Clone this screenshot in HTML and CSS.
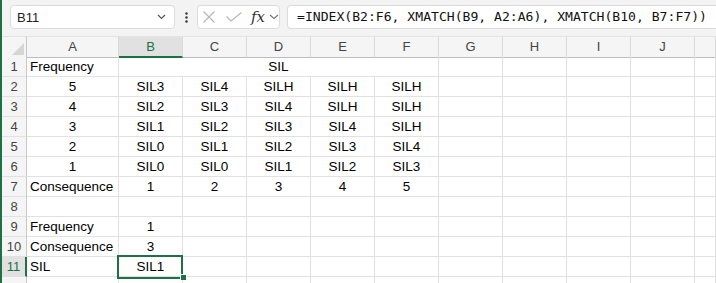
FILE: index.html
```html
<!DOCTYPE html>
<html lang="en">
<head>
  <meta charset="UTF-8">
  <title>SIL matrix</title>
  <link rel="stylesheet" href="styles.css">
</head>
<body>
<div class="app">
  <!-- name box + formula bar -->
  <div class="toolbar">
    <div class="namebox">
      <span>B11</span>
      <svg width="9" height="6" viewBox="0 0 9 6"><path d="M1 1 L4.5 4.5 L8 1" fill="none" stroke="#555" stroke-width="1.2"/></svg>
    </div>
    <div class="more">
      <svg width="3" height="11" viewBox="0 0 3 11"><circle cx="1.5" cy="1.5" r="1.2" fill="#333"/><circle cx="1.5" cy="5.5" r="1.2" fill="#333"/><circle cx="1.5" cy="9.5" r="1.2" fill="#333"/></svg>
    </div>
    <div class="fx-tools">
      <svg class="ico-x" width="12" height="12" viewBox="0 0 12 12"><path d="M0.5 0.5 L11.5 11.5 M11.5 0.5 L0.5 11.5" stroke="#b5b5b5" stroke-width="1.1"/></svg>
      <svg class="ico-ok" width="16" height="10" viewBox="0 0 16 10"><path d="M0.5 4.5 L5 9 L15.5 0.5" fill="none" stroke="#b5b5b5" stroke-width="1.1"/></svg>
      <span class="fx">fx</span>
      <svg width="10" height="6" viewBox="0 0 10 6"><path d="M1 1 L5 4.5 L9 1" fill="none" stroke="#777" stroke-width="1.1"/></svg>
    </div>
    <div class="formula">=INDEX(B2:F6, XMATCH(B9, A2:A6), XMATCH(B10, B7:F7))</div>
  </div>

  <!-- sheet grid -->
  <div class="sheet">
    <div class="row head">
      <div class="corner"><svg width="12" height="12" viewBox="0 0 12 12"><polygon points="12,0 12,12 0,12" fill="#d6d6d6"/></svg></div>
      <div class="col">A</div>
      <div class="col on">B</div>
      <div class="col">C</div>
      <div class="col">D</div>
      <div class="col">E</div>
      <div class="col">F</div>
      <div class="col">G</div>
      <div class="col">H</div>
      <div class="col">I</div>
      <div class="col">J</div>
      <div class="col"></div>
    </div>

    <div class="row">
      <div class="rh">1</div>
      <div class="c">Frequency</div>
      <div class="c mid merge">SIL</div>
      <div class="c"></div><div class="c"></div><div class="c"></div><div class="c"></div><div class="c"></div>
    </div>
    <div class="row">
      <div class="rh">2</div>
      <div class="c mid">5</div>
      <div class="c mid">SIL3</div><div class="c mid">SIL4</div><div class="c mid">SILH</div><div class="c mid">SILH</div><div class="c mid">SILH</div>
      <div class="c"></div><div class="c"></div><div class="c"></div><div class="c"></div><div class="c"></div>
    </div>
    <div class="row">
      <div class="rh">3</div>
      <div class="c mid">4</div>
      <div class="c mid">SIL2</div><div class="c mid">SIL3</div><div class="c mid">SIL4</div><div class="c mid">SILH</div><div class="c mid">SILH</div>
      <div class="c"></div><div class="c"></div><div class="c"></div><div class="c"></div><div class="c"></div>
    </div>
    <div class="row">
      <div class="rh">4</div>
      <div class="c mid">3</div>
      <div class="c mid">SIL1</div><div class="c mid">SIL2</div><div class="c mid">SIL3</div><div class="c mid">SIL4</div><div class="c mid">SILH</div>
      <div class="c"></div><div class="c"></div><div class="c"></div><div class="c"></div><div class="c"></div>
    </div>
    <div class="row">
      <div class="rh">5</div>
      <div class="c mid">2</div>
      <div class="c mid">SIL0</div><div class="c mid">SIL1</div><div class="c mid">SIL2</div><div class="c mid">SIL3</div><div class="c mid">SIL4</div>
      <div class="c"></div><div class="c"></div><div class="c"></div><div class="c"></div><div class="c"></div>
    </div>
    <div class="row">
      <div class="rh">6</div>
      <div class="c mid">1</div>
      <div class="c mid">SIL0</div><div class="c mid">SIL0</div><div class="c mid">SIL1</div><div class="c mid">SIL2</div><div class="c mid">SIL3</div>
      <div class="c"></div><div class="c"></div><div class="c"></div><div class="c"></div><div class="c"></div>
    </div>
    <div class="row">
      <div class="rh">7</div>
      <div class="c">Consequence</div>
      <div class="c mid">1</div><div class="c mid">2</div><div class="c mid">3</div><div class="c mid">4</div><div class="c mid">5</div>
      <div class="c"></div><div class="c"></div><div class="c"></div><div class="c"></div><div class="c"></div>
    </div>
    <div class="row">
      <div class="rh">8</div>
      <div class="c"></div>
      <div class="c"></div><div class="c"></div><div class="c"></div><div class="c"></div><div class="c"></div>
      <div class="c"></div><div class="c"></div><div class="c"></div><div class="c"></div><div class="c"></div>
    </div>
    <div class="row">
      <div class="rh">9</div>
      <div class="c">Frequency</div>
      <div class="c mid">1</div><div class="c"></div><div class="c"></div><div class="c"></div><div class="c"></div>
      <div class="c"></div><div class="c"></div><div class="c"></div><div class="c"></div><div class="c"></div>
    </div>
    <div class="row">
      <div class="rh">10</div>
      <div class="c">Consequence</div>
      <div class="c mid">3</div><div class="c"></div><div class="c"></div><div class="c"></div><div class="c"></div>
      <div class="c"></div><div class="c"></div><div class="c"></div><div class="c"></div><div class="c"></div>
    </div>
    <div class="row">
      <div class="rh on">11</div>
      <div class="c">SIL</div>
      <div class="c mid sel">SIL1</div><div class="c"></div><div class="c"></div><div class="c"></div><div class="c"></div>
      <div class="c"></div><div class="c"></div><div class="c"></div><div class="c"></div><div class="c"></div>
    </div>
    <div class="row">
      <div class="rh"></div>
      <div class="c"></div>
      <div class="c"></div><div class="c"></div><div class="c"></div><div class="c"></div><div class="c"></div>
      <div class="c"></div><div class="c"></div><div class="c"></div><div class="c"></div><div class="c"></div>
    </div>
  </div>
</div>
</body>
</html>
```

FILE: styles.css
```css
body {
  margin: 0;
  background: #fff;
  font-family: "Liberation Sans", Arial, sans-serif;
  color: #000;
}
.app {
  border-left: 2px solid #1e7145;
  height: 283px;
  overflow: hidden;
}

/* formula bar */
.toolbar {
  height: 36px;
  box-sizing: border-box;
  padding: 5px 0 0 8px;
  background: #f3f3f3;
  display: flex;
  align-items: flex-start;
}
.namebox {
  width: 165px;
  height: 24px;
  box-sizing: border-box;
  background: #fff;
  border: 1px solid #dcdcdc;
  border-radius: 4px;
  display: flex;
  align-items: center;
  justify-content: space-between;
  padding: 0 8px 0 6px;
  font-size: 13px;
  color: #222;
}
.more {
  width: 22px;
  height: 24px;
  display: flex;
  align-items: center;
  justify-content: center;
}
.fx-tools {
  width: 83px;
  height: 24px;
  box-sizing: border-box;
  background: #fff;
  border: 1px solid #dcdcdc;
  border-radius: 4px;
  margin-right: 7px;
  display: flex;
  align-items: center;
  padding-left: 5px;
}
.ico-x {
  margin-right: 11px;
}
.ico-ok {
  margin-right: 9px;
}
.fx {
  font-family: "DejaVu Serif", "Liberation Serif", serif;
  font-style: italic;
  font-size: 15px;
  color: #333;
  margin-right: 4px;
  line-height: 22px;
}
.formula {
  flex: 1;
  height: 24px;
  box-sizing: border-box;
  background: #fff;
  border: 1px solid #dcdcdc;
  border-right: none;
  border-radius: 4px 0 0 4px;
  padding-left: 9px;
  font-family: "DejaVu Sans Mono", "Liberation Mono", monospace;
  font-size: 13.1px;
  line-height: 22px;
  white-space: nowrap;
  overflow: hidden;
  color: #111;
}

/* grid */
.row {
  display: grid;
  grid-template-columns: 25px 92px repeat(9, 64px) 1fr;
  height: 20px;
}
.c, .rh, .col, .corner {
  box-sizing: border-box;
  border-right: 1px solid #e1e1e1;
  border-bottom: 1px solid #e1e1e1;
}
.c {
  font-size: 13.5px;
  line-height: 19px;
  padding-left: 3px;
  white-space: nowrap;
}
.mid {
  text-align: center;
  padding-left: 0;
}
.merge {
  grid-column: span 5;
}
.head {
  height: 21px;
}
.col, .corner {
  background: #f5f5f5;
  border-top: 1px solid #e3e3e3;
  border-right-color: #d9d9d9;
  border-bottom-color: #bdbdbd;
  font-size: 13px;
  line-height: 19px;
  text-align: center;
  color: #444;
}
.corner {
  display: flex;
  justify-content: flex-end;
  align-items: flex-end;
  padding: 0 2px 2px 0;
  border-right-color: #c8c8c8;
}
.col.on {
  background: #e1e1e1;
  color: #1e7145;
  border-bottom: 2px solid #1e7145;
}
.rh {
  background: #f5f5f5;
  border-right-color: #c8c8c8;
  font-size: 13px;
  line-height: 19px;
  text-align: center;
  color: #444;
}
.rh.on {
  background: #e1e1e1;
  color: #1e7145;
  border-right: 2px solid #1e7145;
}

/* active cell */
.sel {
  position: relative;
}
.sel::after {
  content: "";
  position: absolute;
  left: -2px;
  top: -2px;
  width: 66px;
  height: 24px;
  box-sizing: border-box;
  border: 2px solid #1e7145;
}
.sel::before {
  content: "";
  position: absolute;
  left: 61px;
  top: 17px;
  width: 5px;
  height: 5px;
  background: #1e7145;
  border: 1px solid #fff;
  z-index: 1;
}
```
